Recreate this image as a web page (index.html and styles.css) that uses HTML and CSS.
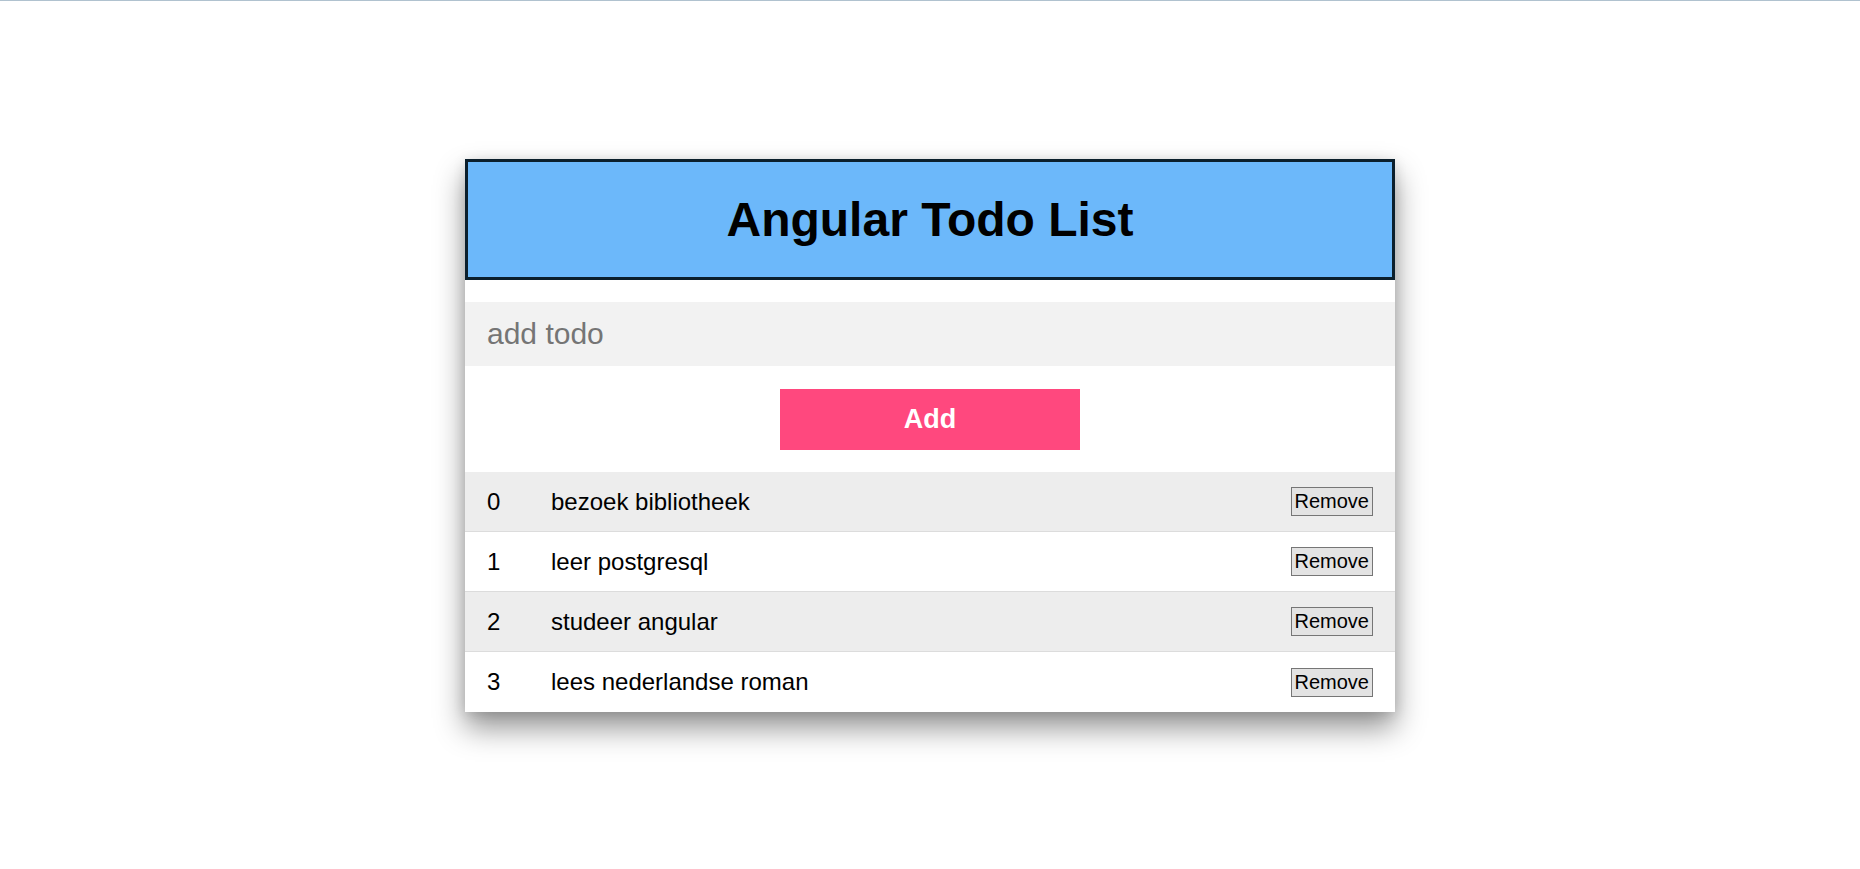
FILE: index.html
```html
<!DOCTYPE html>
<html lang="nl">
<head>
<meta charset="utf-8">
<title>Angular Todo List</title>
<link rel="stylesheet" href="styles.css">
</head>
<body>
<div class="topline"></div>
<main class="page">
  <section class="card">
    <header class="card-header">
      <h1>Angular Todo List</h1>
    </header>
    <div class="add-form">
      <input class="todo-input" type="text" placeholder="add todo">
      <div class="add-row">
        <button class="add-btn" type="button">Add</button>
      </div>
    </div>
    <ul class="todo-list">
      <li class="todo-item"><span class="idx">0</span><span class="text">bezoek bibliotheek</span><button class="remove-btn" type="button">Remove</button></li>
      <li class="todo-item"><span class="idx">1</span><span class="text">leer postgresql</span><button class="remove-btn" type="button">Remove</button></li>
      <li class="todo-item"><span class="idx">2</span><span class="text">studeer angular</span><button class="remove-btn" type="button">Remove</button></li>
      <li class="todo-item"><span class="idx">3</span><span class="text">lees nederlandse roman</span><button class="remove-btn" type="button">Remove</button></li>
    </ul>
  </section>
</main>
</body>
</html>
```

FILE: styles.css
```css
* { box-sizing: border-box; }

html, body {
  margin: 0;
  padding: 0;
  background: #ffffff;
  font-family: "Liberation Sans", Arial, sans-serif;
  color: #000;
}

.topline {
  height: 1px;
  background: #b0c2cf;
}

.page {
  display: flex;
  justify-content: center;
  align-items: flex-start;
  padding-top: 158px;
  padding-bottom: 120px;
  min-height: 860px;
}

.card {
  width: 930px;
  background: #fff;
  box-shadow: 0 16px 28px rgba(0, 0, 0, 0.42), 0 2px 12px rgba(0, 0, 0, 0.12);
}

.card-header {
  background: #6cb8fa;
  border: 3px solid #0b1f2c;
  padding: 30px 0;
  text-align: center;
}

.card-header h1 {
  margin: 0;
  font-size: 48px;
  font-weight: bold;
  line-height: 55px;
}

.add-form {
  padding-top: 22px;
}

.todo-input {
  display: block;
  width: 100%;
  height: 64px;
  border: none;
  outline: none;
  background: #f2f2f2;
  padding: 0 22px;
  font-family: "Liberation Sans", Arial, sans-serif;
  font-size: 30px;
  color: #000;
}

.todo-input::placeholder {
  color: #757575;
}

.add-row {
  display: flex;
  justify-content: center;
  padding: 23px 0 22px;
}

.add-btn {
  width: 300px;
  height: 61px;
  border: none;
  background: #ff487e;
  color: #fff;
  font-family: "Liberation Sans", Arial, sans-serif;
  font-size: 27px;
  font-weight: bold;
  cursor: pointer;
}

.todo-list {
  list-style: none;
  margin: 0;
  padding: 0;
}

.todo-item {
  display: flex;
  align-items: center;
  height: 60px;
  padding: 0 22px;
  font-size: 24px;
  border-bottom: 1px solid #dcdcdc;
}

.todo-item:nth-child(odd) {
  background: #ededed;
}

.todo-item:last-child {
  border-bottom: none;
}

.idx {
  width: 64px;
  flex: none;
}

.text {
  flex: 1;
}

.remove-btn {
  font-family: "Liberation Sans", Arial, sans-serif;
  font-size: 20px;
  line-height: 23px;
  padding: 2px 3px;
  background: #e3e3e3;
  border: 1px solid #767676;
  border-radius: 0;
  color: #000;
}
```
